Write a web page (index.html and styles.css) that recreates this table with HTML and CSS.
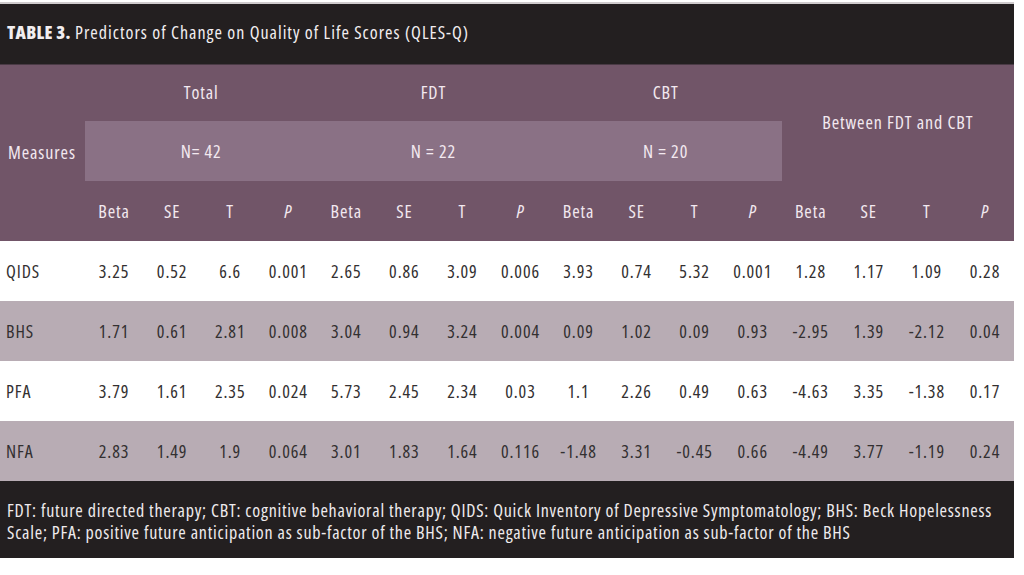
FILE: index.html
```html
<!DOCTYPE html>
<html>
<head>
<meta charset="utf-8">
<link rel="stylesheet" href="styles.css">
</head>
<body>
<div class="sheet">
  <div class="title"><b>TABLE 3.</b> Predictors of Change on Quality of Life Scores (QLES-Q)</div>
  <table class="grid">
    <colgroup>
      <col class="c-measure">
      <col span="16" class="c-num">
    </colgroup>
    <thead>
      <tr class="h1">
        <th rowspan="3" class="measures">Measures</th>
        <th colspan="4">Total</th>
        <th colspan="4">FDT</th>
        <th colspan="4">CBT</th>
        <th colspan="4" rowspan="2" class="between">Between FDT and CBT</th>
      </tr>
      <tr class="h2">
        <th colspan="4" class="nbox">N= 42</th>
        <th colspan="4" class="nbox">N = 22</th>
        <th colspan="4" class="nbox">N = 20</th>
      </tr>
      <tr class="h3">
        <th>Beta</th><th>SE</th><th>T</th><th><i>P</i></th>
        <th>Beta</th><th>SE</th><th>T</th><th><i>P</i></th>
        <th>Beta</th><th>SE</th><th>T</th><th><i>P</i></th>
        <th>Beta</th><th>SE</th><th>T</th><th><i>P</i></th>
      </tr>
    </thead>
    <tbody>
      <tr>
        <td class="name">QIDS</td>
        <td>3.25</td><td>0.52</td><td>6.6</td><td>0.001</td>
        <td>2.65</td><td>0.86</td><td>3.09</td><td>0.006</td>
        <td>3.93</td><td>0.74</td><td>5.32</td><td>0.001</td>
        <td>1.28</td><td>1.17</td><td>1.09</td><td>0.28</td>
      </tr>
      <tr class="alt">
        <td class="name">BHS</td>
        <td>1.71</td><td>0.61</td><td>2.81</td><td>0.008</td>
        <td>3.04</td><td>0.94</td><td>3.24</td><td>0.004</td>
        <td>0.09</td><td>1.02</td><td>0.09</td><td>0.93</td>
        <td>-2.95</td><td>1.39</td><td>-2.12</td><td>0.04</td>
      </tr>
      <tr>
        <td class="name">PFA</td>
        <td>3.79</td><td>1.61</td><td>2.35</td><td>0.024</td>
        <td>5.73</td><td>2.45</td><td>2.34</td><td>0.03</td>
        <td>1.1</td><td>2.26</td><td>0.49</td><td>0.63</td>
        <td>-4.63</td><td>3.35</td><td>-1.38</td><td>0.17</td>
      </tr>
      <tr class="alt">
        <td class="name">NFA</td>
        <td>2.83</td><td>1.49</td><td>1.9</td><td>0.064</td>
        <td>3.01</td><td>1.83</td><td>1.64</td><td>0.116</td>
        <td>-1.48</td><td>3.31</td><td>-0.45</td><td>0.66</td>
        <td>-4.49</td><td>3.77</td><td>-1.19</td><td>0.24</td>
      </tr>
    </tbody>
  </table>
  <div class="foot">FDT: future directed therapy; CBT: cognitive behavioral therapy; QIDS: Quick Inventory of Depressive Symptomatology; BHS: Beck Hopelessness Scale; PFA: positive future anticipation as sub-factor of the BHS; NFA: negative future anticipation as sub-factor of the BHS</div>
</div>
</body>
</html>
```

FILE: styles.css
```css
html, body {
  margin: 0;
  padding: 0;
  background: #ffffff;
}

body {
  padding-top: 2px;
  font-family: "Open Sans", "DejaVu Sans Condensed", sans-serif;
  font-stretch: 75%;
  letter-spacing: 0.9px;
}

.sheet {
  width: 1014px;
  border-top: 2px solid #cfcbcd;
}

.title {
  background: #231f20;
  color: #f2eef0;
  height: 61px;
  box-sizing: border-box;
  padding: 17px 0 0 7px;
  font-size: 18px;
  line-height: 22px;
  letter-spacing: 1px;
  border-bottom: 1px solid #4a3a45;
}

.title b {
  font-weight: 800;
  letter-spacing: 0.3px;
}

.grid {
  border-collapse: collapse;
  table-layout: fixed;
  width: 1014px;
}

.c-measure { width: 85px; }
.c-num { width: 58px; }

.grid th,
.grid td {
  padding: 0;
  text-align: center;
  font-weight: normal;
  font-size: 18px;
  white-space: nowrap;
}

.grid thead th {
  background: #715568;
  color: #f3e9f0;
}

.grid thead .h1 th {
  height: 56px;
  padding-bottom: 3px;
  box-sizing: border-box;
}
.grid thead .h1 th.measures,
.grid thead .h1 th.between {
  padding-bottom: 2px;
}
.grid thead .h2 th { height: 60px; }
.grid thead .h3 th { height: 60px; }

.grid thead th.nbox {
  background: #8a7185;
}

.grid thead th.measures {
  text-align: left;
  padding-left: 8px;
}

.grid tbody td {
  height: 60px;
  color: #333031;
  background: #ffffff;
}

.grid tbody tr.alt td {
  background: #b8acb4;
}

.grid tbody td.name {
  text-align: left;
  padding-left: 6px;
}

.foot {
  background: #231f20;
  color: #efebed;
  height: 77px;
  box-sizing: border-box;
  padding: 18px 2px 0 7px;
  font-size: 18px;
  line-height: 22px;
  letter-spacing: 0.76px;
}
```
